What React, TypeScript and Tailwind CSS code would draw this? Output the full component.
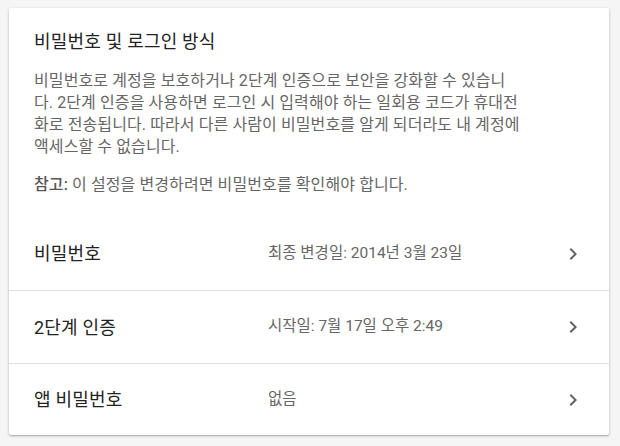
import React from "react";

const Chevron = () => (
  <svg width="24" height="24" viewBox="0 0 24 24" className="shrink-0">
    <path d="M8.59 16.59 13.17 12 8.59 7.41 10 6l6 6-6 6z" fill="#5f6368" />
  </svg>
);

const rows = [
  { label: "비밀번호", value: "최종 변경일: 2014년 3월 23일", h: "h-[73px]" },
  { label: "2단계 인증", value: "시작일: 7월 17일 오후 2:49", h: "h-[73px]" },
  { label: "앱 비밀번호", value: "없음", h: "h-[72px]" },
];

const lines = [
  "비밀번호로 계정을 보호하거나 2단계 인증으로 보안을 강화할 수 있습니",
  "다. 2단계 인증을 사용하면 로그인 시 입력해야 하는 일회용 코드가 휴대전",
  "화로 전송됩니다. 따라서 다른 사람이 비밀번호를 알게 되더라도 내 계정에",
  "액세스할 수 없습니다.",
];

export default function App() {
  return (
    <div
      className="w-[620px] h-[446px] bg-[#f5f5f5] pt-[8px] pl-[9px]"
      style={{ fontFamily: 'Roboto, "Noto Sans CJK KR", sans-serif' }}
    >
      <div className="w-[600px] bg-white rounded-[2px] shadow-[0_1px_3px_rgba(0,0,0,0.25),0_1px_1px_rgba(0,0,0,0.12)] flex flex-col">
        <div className="px-[25px] pt-[22px] pb-[21px]">
          <h1 className="text-[18px] leading-[24px] text-[#222222] tracking-[0.2px]">비밀번호 및 로그인 방식</h1>
          <p className="mt-[16px] text-[16px] leading-[22px] text-[#666666] tracking-[0.1px]">
            {lines.map((l) => (
              <span key={l} className="block whitespace-nowrap">{l}</span>
            ))}
          </p>
          <p className="mt-[16px] text-[16px] leading-[22px] text-[#666666] tracking-[0.1px]">
            <span className="font-medium text-[#555555]">참고:</span> 이 설정을 변경하려면 비밀번호를 확인해야 합니다.
          </p>
        </div>
        {rows.map((r, i) => (
          <div
            key={r.label}
            className={`flex items-center shrink-0 ${r.h} pl-[25px] pr-[24px] ${i > 0 ? "border-t border-[#e0e0e0]" : ""}`}
          >
            <div className="w-[234px] text-[18px] text-[#222222] tracking-[0.2px]">{r.label}</div>
            <div className="flex-1 text-[15.5px] text-[#666666]">{r.value}</div>
            <Chevron />
          </div>
        ))}
      </div>
    </div>
  );
}
